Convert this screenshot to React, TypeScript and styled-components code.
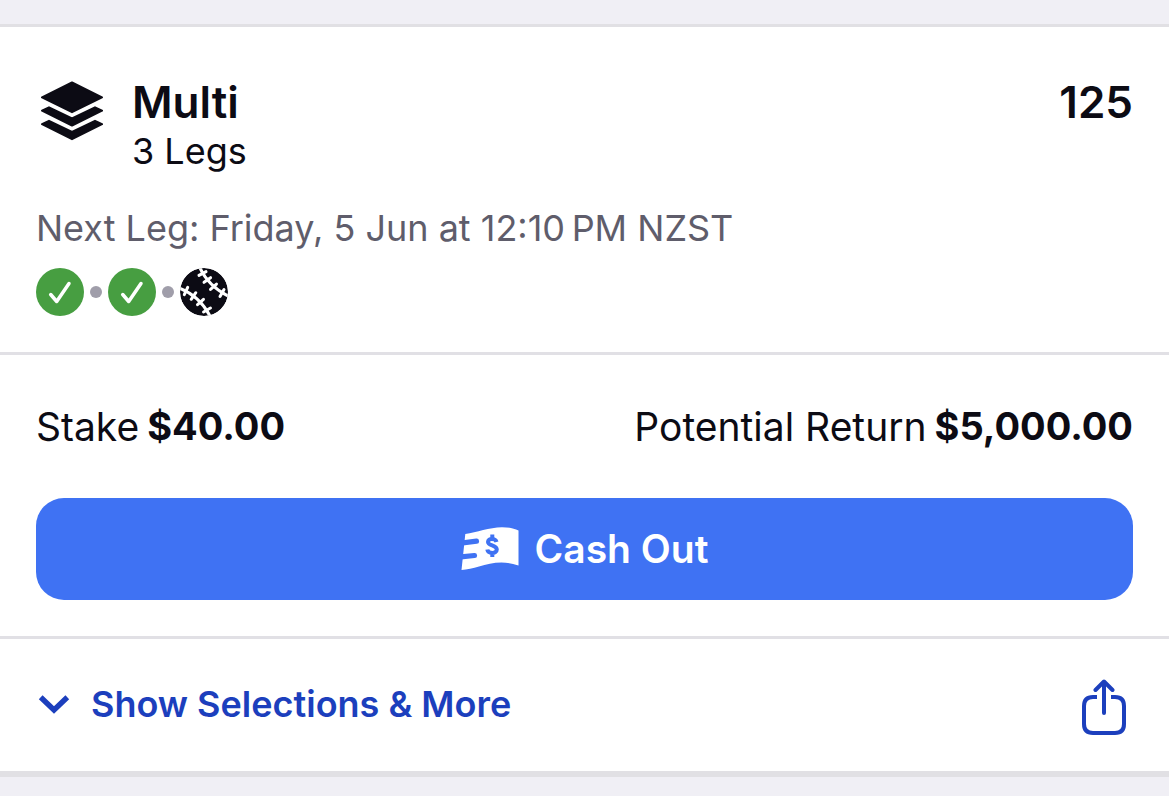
import React from "react";
import styled, { createGlobalStyle } from "styled-components";

const ink = "#0c0b14";
const link = "#1c3fbd";
const action = "#3f72f3";

const GlobalStyle = createGlobalStyle`
  *, *::before, *::after { box-sizing: border-box; }
  html { background: #f0eff5; }
  body {
    margin: 0;
    color: ${ink};
    font-family: Inter, "Liberation Sans", sans-serif;
    font-size: 36px;
  }
  h1, p, ul, dl, dd { margin: 0; padding: 0; }
  button { font-family: inherit; cursor: pointer; }
  svg { display: block; flex: none; }
`;

const Page = styled.main`
  padding: 24px 0;
`;

const Card = styled.article`
  background: #fff;
  border-top: 3px solid #e1e0e4;
  border-bottom: 6px solid #e1e0e4;
`;

const Section = styled.section`
  padding: 48px 36px 36px;
  & + & { border-top: 3px solid #e1e0e5; }
`;

const Header = styled.header`
  display: flex;
  align-items: flex-start;
`;

const LayersBox = styled.div`
  padding: 6px 29px 0 5px;
`;

const Titles = styled.div`
  flex: 1;
`;

const Title = styled.h1`
  font-size: 44px;
  line-height: 54px;
  font-weight: 600;
`;

const Subtitle = styled.p`
  line-height: 44px;
`;

const Odds = styled.strong`
  font-size: 44px;
  line-height: 54px;
  font-weight: 600;
`;

const NextLeg = styled.p`
  margin: 32px 0 16px;
  line-height: 47px;
  color: #5f5d6b;
`;

const Legs = styled.ul`
  display: flex;
  align-items: center;
  gap: 6px;
  list-style: none;
`;

const Leg = styled.li`
  display: flex;
  align-items: center;
  gap: 6px;
  & + &::before {
    content: "";
    width: 12px;
    height: 12px;
    border-radius: 50%;
    background: #a09eaa;
  }
`;

const Amounts = styled.dl`
  display: flex;
  justify-content: space-between;
  margin-bottom: 48px;
  font-size: 39px;
  line-height: 47px;
`;

const Amount = styled.div`
  display: flex;
  gap: 8px;
  dd { font-size: 38px; font-weight: 700; }
`;

const CashOutButton = styled.button`
  display: flex;
  align-items: center;
  justify-content: center;
  gap: 16px;
  width: 100%;
  height: 102px;
  border: 0;
  border-radius: 28px;
  padding: 0 0 2px;
  background: ${action};
  color: #fff;
  font-size: 39px;
  font-weight: 600;
`;

const Footer = styled.footer`
  display: flex;
  align-items: flex-start;
  justify-content: space-between;
  padding: 40px 43px 36px 38px;
  border-top: 3px solid #e1e0e5;
`;

const LinkButton = styled.button`
  display: flex;
  align-items: center;
  gap: 21px;
  padding: 0;
  border: 0;
  background: none;
  color: ${link};
  font-size: 36px;
  line-height: 50px;
  font-weight: 600;
`;

const LayersIcon = () => (
  <svg width="62" height="60" viewBox="0 0 62 60" fill={ink} stroke={ink} strokeWidth="2" strokeLinejoin="round" aria-hidden="true">
    <path d="M31 1.5 61 16.300 31 31.200 1 16.300Z" />
    <path d="M1 29.700 8 26.300 31 37.500 54 26.300 61 29.700 31 44.600Z" />
    <path d="M1 43.200 8 39.800 31 51 54 39.800 61 43.200 31 58.200Z" />
  </svg>
);

const WonIcon = () => (
  <svg width="48" height="48" viewBox="0 0 48 48" role="img" aria-label="Won">
    <circle cx="24" cy="24" r="24" fill="#479e41" />
    <path d="M14.700 26.500 20.700 33.500 33 15.500" fill="none" stroke="#fff" strokeWidth="3.500" strokeLinecap="round" strokeLinejoin="round" />
  </svg>
);

const stitches = [
  [22.5, 5.5, -28], [27.3, 12, -35], [33.5, 18.8, -42], [42, 25, -60],
  [6, 23, -65], [13.5, 28, -55], [20.5, 34, -42], [27, 42, -30],
];

const BaseballIcon = () => (
  <svg width="48" height="48" viewBox="0 0 48 48" role="img" aria-label="Baseball, upcoming">
    <clipPath id="ball"><circle cx="24" cy="24" r="24" /></clipPath>
    <g clipPath="url(#ball)" fill="none" stroke="#fff" strokeWidth="3">
      <circle cx="24" cy="24" r="24" fill={ink} stroke="none" />
      <path d="M19.500 -1Q28 18 49 28.500M-1 20Q20 28 30.500 49" />
      {stitches.map(([x, y, r]) => (
        <path key={`${x}-${y}`} d="M-4 0H4" strokeLinecap="round" transform={`translate(${x} ${y}) rotate(${r})`} />
      ))}
    </g>
  </svg>
);

const CashIcon = () => (
  <svg width="58" height="44" viewBox="0 0 58 44" fill="none" aria-hidden="true">
    <path fill="#fff" d="M4.300 8C16 6.500 28 1.300 41 1.200 48 1.200 53 2.500 57.500 4.500V39.500C42 34 30 37 18 40.500 12 42.500 6 43.500 .500 44Z" />
    <path d="M-1 17.200 15.500 15.200M-1 31 13.500 29.500" stroke={action} strokeWidth="5.200" strokeLinecap="round" />
    <path d="M35.500 16C34.500 12 27 12 27 16S35.800 19 35.800 23.500 27 28 26.300 23.500M31.300 8.500V13M31.300 26.500V31" stroke={action} strokeWidth="4" />
  </svg>
);

const ChevronIcon = () => (
  <svg width="32" height="20" viewBox="0 0 32 20" aria-hidden="true">
    <path d="M2.700 3.300 16 16 29.300 3.300" fill="none" stroke={link} strokeWidth="5.400" />
  </svg>
);

const ShareIcon = () => (
  <svg width="44" height="56" viewBox="0 0 44 56" fill="none" stroke={link} strokeWidth="4" aria-hidden="true">
    <path d="M15 18H11Q2 18 2 27V45Q2 54 11 54H33Q42 54 42 45V27Q42 18 33 18H29" />
    <path d="M22 34V3M13.500 11 22 2.500 30.500 11" strokeLinecap="round" strokeLinejoin="round" />
  </svg>
);

export default function App() {
  return (
    <Page>
      <GlobalStyle />
      <Card>
        <Section>
          <Header>
            <LayersBox><LayersIcon /></LayersBox>
            <Titles>
              <Title>Multi</Title>
              <Subtitle>3 Legs</Subtitle>
            </Titles>
            <Odds>125</Odds>
          </Header>
          <NextLeg>Next Leg: Friday, 5 Jun at 12:10{"\u2009"}PM NZST</NextLeg>
          <Legs>
            <Leg><WonIcon /></Leg>
            <Leg><WonIcon /></Leg>
            <Leg><BaseballIcon /></Leg>
          </Legs>
        </Section>
        <Section>
          <Amounts>
            <Amount><dt>Stake</dt><dd>$40.00</dd></Amount>
            <Amount><dt>Potential Return</dt><dd>$5,000.00</dd></Amount>
          </Amounts>
          <CashOutButton type="button"><CashIcon />Cash Out</CashOutButton>
        </Section>
        <Footer>
          <LinkButton type="button"><ChevronIcon />Show Selections &amp; More</LinkButton>
          <LinkButton type="button" aria-label="Share"><ShareIcon /></LinkButton>
        </Footer>
      </Card>
    </Page>
  );
}
